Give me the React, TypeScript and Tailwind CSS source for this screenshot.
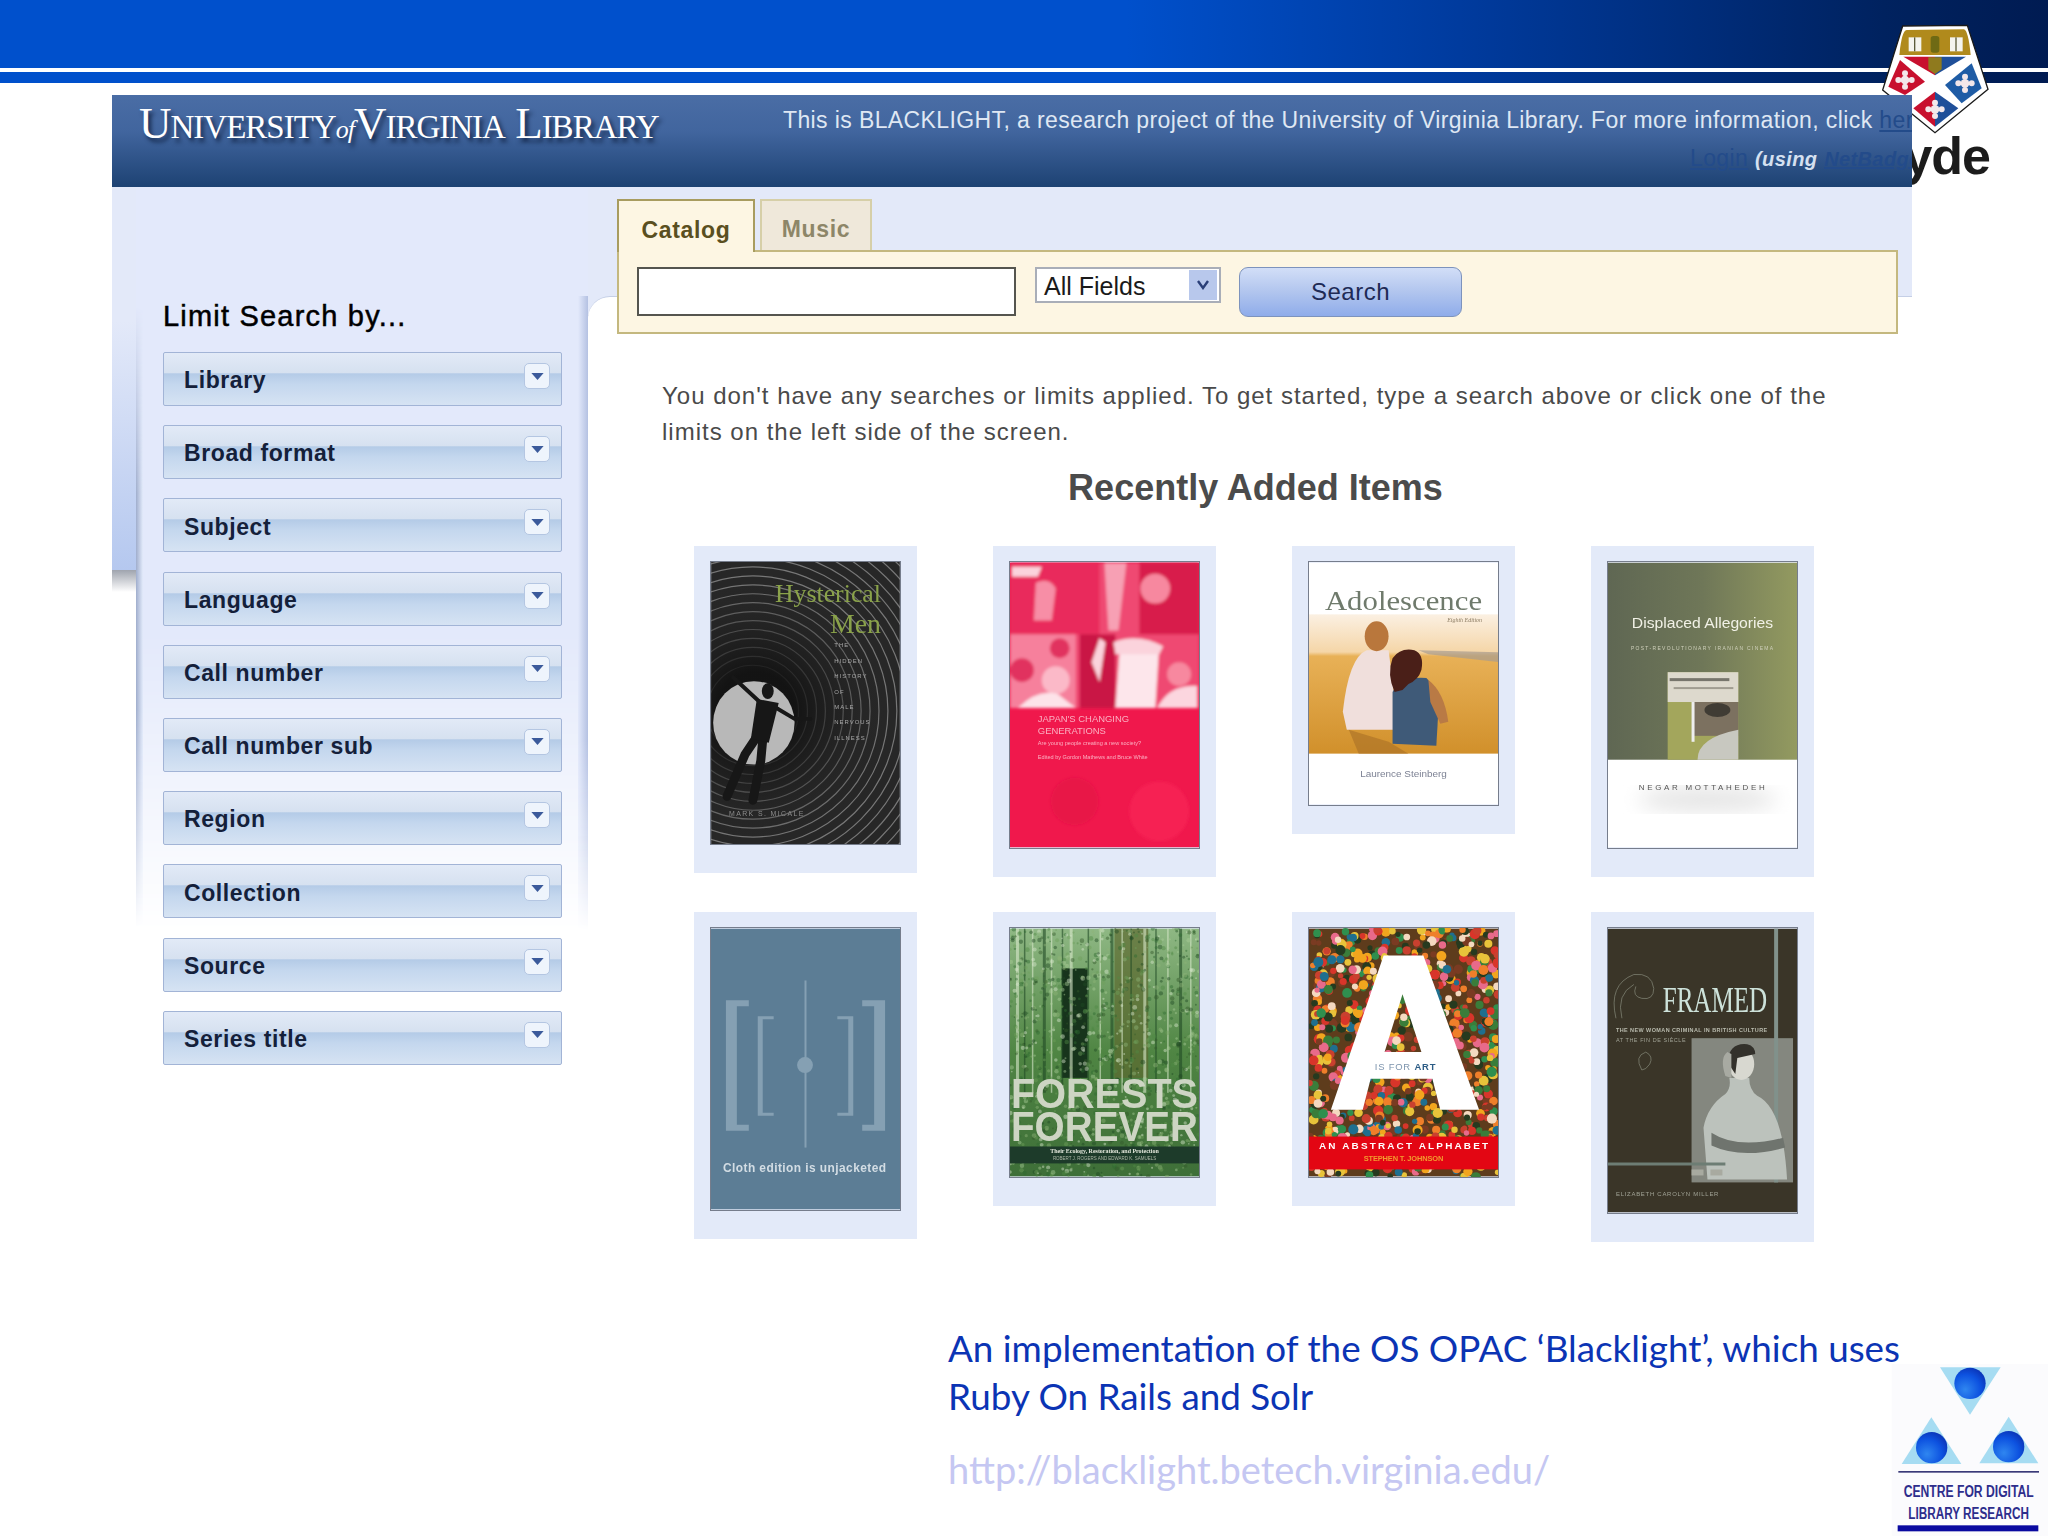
const filters = ["Library", "Broad format", "Subject", "Language", "Call number", "Call number sub", "Region", "Collection", "Source", "Series title"];

const makeDots = (count: number, seed: number, w: number, h: number, colors: string[], min: number, spread: number) => {
  const list: { x: number; y: number; r: number; c: string }[] = [];
  let s = seed;
  const next = () => {
    s = (s * 1103515245 + 12345) % 2147483648;
    return s / 2147483648;
  };
  for (let i = 0; i < count; i++) {
    list.push({ x: next() * w, y: next() * h, r: min + next() * spread, c: colors[Math.floor(next() * colors.length)] });
  }
  return list;
};
const candy = makeDots(950, 17, 190, 250, ["#d8352a", "#f2a51e", "#2f8f4e", "#e8c33a", "#c9402f", "#1f6f8f", "#7a3b22", "#ef7f2a", "#f4d9c0", "#3a7d3a", "#e86a8a", "#263a1f"], 2.6, 2.6);
const leaves = makeDots(1300, 5, 190, 250, ["#d9e8cf", "#a9cb96", "#6fa05c", "#4f8a45", "#2f6a31", "#1e4a24", "#8fb377", "#34592b"], 0.8, 1.6);

const rings = Array.from({ length: 24 }, (_, i) => 46 + i * 9);
const trees = [6, 14, 22, 33, 41, 52, 60, 78, 90, 101, 112, 121, 134, 146, 158, 170, 181];

function HystericalMen() {
  return (
    <svg viewBox="0 0 190 284" className="w-full h-full block">
      <defs>
        <radialGradient id="tunnel" gradientUnits="userSpaceOnUse" cx="45" cy="150" r="130">
          <stop offset="0.3" stopColor="#111" stopOpacity="0.9" />
          <stop offset="0.8" stopColor="#222" stopOpacity="0.25" />
          <stop offset="1" stopColor="#222" stopOpacity="0" />
        </radialGradient>
      </defs>
      <rect width="190" height="284" fill="#272727" />
      {rings.map((r) => (
        <circle key={r} cx="42" cy="150" r={r} fill="none" stroke="#9a9a9a" strokeWidth="1.2" opacity="0.7" />
      ))}
      <rect width="190" height="284" fill="url(#tunnel)" />
      <ellipse cx="43" cy="162" rx="41" ry="42" fill="#b8b8b8" />
      <g stroke="#171717" strokeLinecap="round" fill="none">
        <path d="M50 142 L22 116" strokeWidth="4" />
        <path d="M64 146 L84 158 L100 158" strokeWidth="4" />
        <path d="M46 176 L34 194 L16 236" strokeWidth="9" />
        <path d="M52 178 L50 200 L42 240" strokeWidth="9" />
      </g>
      <ellipse cx="57" cy="130" rx="6" ry="8" fill="#171717" />
      <path d="M46 138 L68 142 L58 182 L40 178 Z" fill="#171717" />
      <text x="171" y="40" textAnchor="end" fontFamily="Liberation Serif" fontSize="26" fill="#8aa24a">Hysterical</text>
      <text x="171" y="72" textAnchor="end" fontFamily="Liberation Serif" fontSize="28" fill="#8aa24a">Men</text>
      {["THE", "HIDDEN", "HISTORY", "OF", "MALE", "NERVOUS", "ILLNESS"].map((t, i) => (
        <text key={t} x="124" y={86 + i * 15.5} fontFamily="Liberation Sans" fontSize="6" letterSpacing="1" fill="#a8a8a8">{t}</text>
      ))}
      <text x="18" y="256" fontFamily="Liberation Sans" fontSize="7" letterSpacing="1.4" fill="#8c8c8c">MARK S. MICALE</text>
    </svg>
  );
}

function JapanGenerations() {
  return (
    <svg viewBox="0 0 190 286" className="w-full h-full block">
      <defs>
        <filter id="soft">
          <feGaussianBlur stdDeviation="1.4" />
        </filter>
      </defs>
      <rect width="190" height="286" fill="#f0184c" />
      <g filter="url(#soft)">
        <rect width="190" height="146" fill="#ef4a72" />
        <rect x="0" y="0" width="90" height="72" fill="#e92b5c" />
        <path d="M95 0 l22 0 l-8 68 l-10 0 z" fill="#f7a0b4" />
        <rect x="130" y="0" width="60" height="72" fill="#d81b4c" />
        <circle cx="146" cy="26" r="15" fill="#f7889f" />
        <path d="M2 4 h30 l-4 10 h-26 z" fill="#fbd3dc" />
        <path d="M26 20 q14 -6 20 6 l-4 32 h-18 z" fill="#f78ea6" />
        <rect x="0" y="72" width="66" height="74" fill="#f6809c" />
        <circle cx="50" cy="86" r="10" fill="#e1305f" />
        <circle cx="12" cy="108" r="12" fill="#e1305f" />
        <circle cx="46" cy="118" r="14" fill="#fbb9c8" />
        <path d="M8 146 q20 -20 40 -14 l18 14 z" fill="#fde3e9" />
        <rect x="70" y="72" width="36" height="74" fill="#c91445" />
        <path d="M82 100 l8 -24 l6 4 l-6 40 z" fill="#fbd3dc" />
        <path d="M110 92 q24 -22 40 -8 l-4 62 l-40 0 z" fill="#fde6eb" />
        <path d="M104 80 q24 -10 50 4 l-4 8 h-44 z" fill="#fbd3dc" />
        <circle cx="170" cy="112" r="12" fill="#f7889f" />
        <path d="M148 146 q12 -24 40 -22 v22 z" fill="#fcd6df" />
      </g>
      <text x="28" y="160" fontFamily="Liberation Sans" fontSize="9.5" fill="#fbb0c2">JAPAN'S CHANGING</text>
      <text x="28" y="172" fontFamily="Liberation Sans" fontSize="9.5" fill="#fbb0c2">GENERATIONS</text>
      <text x="28" y="183" fontFamily="Liberation Sans" fontSize="5.6" fill="#fbb0c2">Are young people creating a new society?</text>
      <text x="28" y="197" fontFamily="Liberation Sans" fontSize="5.6" fill="#fbb0c2">Edited by Gordon Mathews and Bruce White</text>
      <g filter="url(#soft)">
        <circle cx="65" cy="240" r="24" fill="#e0103f" opacity="0.5" />
        <circle cx="150" cy="250" r="30" fill="#fa2858" opacity="0.6" />
      </g>
    </svg>
  );
}

function Adolescence() {
  return (
    <svg viewBox="0 0 190 243" className="w-full h-full block">
      <defs>
        <linearGradient id="beach" x1="0" x2="0" y1="0" y2="1">
          <stop offset="0" stopColor="#fbf0e2" />
          <stop offset="0.27" stopColor="#f5d6a8" />
          <stop offset="0.3" stopColor="#e8b157" />
          <stop offset="1" stopColor="#d1902b" />
        </linearGradient>
      </defs>
      <rect width="190" height="243" fill="#fff" />
      <rect y="52" width="190" height="140" fill="url(#beach)" />
      <path d="M110 88 L190 90 V100 L120 92 Z" fill="#a89c90" opacity="0.7" />
      <text x="95" y="48" textAnchor="middle" fontFamily="Liberation Serif" fontSize="28" fill="#6f7a6c" textLength="158" lengthAdjust="spacingAndGlyphs">Adolescence</text>
      <text x="174" y="60" textAnchor="end" fontFamily="Liberation Serif" fontSize="6" fontStyle="italic" fill="#8a7a60">Eighth Edition</text>
      <path d="M38 168 L34 150 Q40 95 58 88 H80 L90 168 Z" fill="#f0dfdc" />
      <ellipse cx="68" cy="74" rx="12" ry="15" fill="#b9773c" />
      <path d="M84 182 L84 130 Q92 114 118 116 Q128 125 130 150 L128 184 Z" fill="#3f5a78" />
      <path d="M120 118 Q136 130 140 160 L132 162 L122 140 Z" fill="#b97a45" />
      <path d="M86 130 Q78 112 84 96 Q92 85 106 88 Q116 92 113 108 Q110 118 100 122 L94 128 Z" fill="#4a1f18" />
      <path d="M40 168 L80 180 L100 192 L50 192 Z" fill="#a86f26" opacity="0.6" />
      <text x="95" y="216" textAnchor="middle" fontFamily="Liberation Sans" fontSize="10" fill="#7d8294">Laurence Steinberg</text>
    </svg>
  );
}

function DisplacedAllegories() {
  return (
    <svg viewBox="0 0 190 286" className="w-full h-full block">
      <defs>
        <linearGradient id="olive" x1="0" x2="1" y1="0" y2="0">
          <stop offset="0" stopColor="#5f6753" />
          <stop offset="0.5" stopColor="#6f7758" />
          <stop offset="1" stopColor="#939a60" />
        </linearGradient>
        <filter id="haze">
          <feGaussianBlur stdDeviation="10" />
        </filter>
      </defs>
      <rect width="190" height="286" fill="#fff" />
      <ellipse cx="100" cy="238" rx="70" ry="12" fill="#e4e4e4" filter="url(#haze)" />
      <rect width="190" height="198" fill="url(#olive)" />
      <text x="95" y="66" textAnchor="middle" fontFamily="Liberation Sans" fontSize="15.5" fill="#f1f1e6" textLength="142" lengthAdjust="spacingAndGlyphs">Displaced Allegories</text>
      <text x="95" y="88" textAnchor="middle" fontFamily="Liberation Sans" fontSize="5" letterSpacing="1" fill="#cfd0bb" textLength="144">POST-REVOLUTIONARY IRANIAN CINEMA</text>
      <rect x="60" y="110" width="71" height="88" fill="#a3a65c" />
      <rect x="60" y="110" width="71" height="30" fill="#ddd9cd" />
      <rect x="62" y="116" width="60" height="3" fill="#77756c" />
      <rect x="66" y="125" width="60" height="2" fill="#a09c90" />
      <rect x="85" y="140" width="46" height="34" fill="#7c7160" />
      <ellipse cx="110" cy="148" rx="13" ry="7" fill="#403c34" />
      <rect x="84" y="140" width="3" height="40" fill="#eee" />
      <path d="M90 198 q0 -22 41 -30 l0 30 z" fill="#c8c8c0" />
      <text x="95" y="228" textAnchor="middle" fontFamily="Liberation Sans" fontSize="8" letterSpacing="1.5" fill="#555" textLength="128">NEGAR MOTTAHEDEH</text>
    </svg>
  );
}

function Unjacketed() {
  return (
    <svg viewBox="0 0 190 282" className="w-full h-full block">
      <rect width="190" height="282" fill="#5c7d95" />
      <g fill="#85a0b3">
        <path d="M15 72 h23 v6 h-12 v119 h12 v6 h-23 z" />
        <path d="M175 72 h-23 v6 h12 v119 h-12 v6 h23 z" />
        <path d="M47 88 h16 v3 h-11 v94 h11 v3 h-16 z" />
        <path d="M143 88 h-16 v3 h11 v94 h-11 v3 h16 z" />
        <rect x="94" y="52" width="2" height="168" />
        <ellipse cx="94.500" cy="137" rx="8" ry="8" />
      </g>
      <text x="94" y="245" textAnchor="middle" fontFamily="Liberation Sans" fontSize="12" fontWeight="700" fill="#d3dde4" textLength="164">Cloth edition is unjacketed</text>
    </svg>
  );
}

function ForestsForever() {
  return (
    <svg viewBox="0 0 190 249" className="w-full h-full block">
      <defs>
        <linearGradient id="forest" x1="0" x2="0" y1="0" y2="1">
          <stop offset="0" stopColor="#8fb884" />
          <stop offset="0.5" stopColor="#4f8543" />
          <stop offset="1" stopColor="#3e6f38" />
        </linearGradient>
      </defs>
      <rect width="190" height="249" fill="url(#forest)" />
      <rect x="52" y="40" width="26" height="110" fill="#17341c" />
      <rect x="105" y="0" width="34" height="150" fill="#5c6a30" opacity="0.7" />
      {trees.map((x, i) => (
        <rect key={x} x={x} y="0" width={i % 3 === 0 ? 3 : 1.500} height="165" fill={i % 2 === 0 ? "#d8e8cc" : "#1f4a24"} opacity="0.6" />
      ))}
      {leaves.map((d, i) => (
        <circle key={i} cx={d.x} cy={d.y} r={d.r} fill={d.c} opacity="0.45" />
      ))}
      <text x="95" y="180" textAnchor="middle" fontFamily="Liberation Sans" fontWeight="700" fontSize="42" fill="#cdd5c3" textLength="188" lengthAdjust="spacingAndGlyphs">FORESTS</text>
      <text x="95" y="213" textAnchor="middle" fontFamily="Liberation Sans" fontWeight="700" fontSize="42" fill="#cdd5c3" textLength="188" lengthAdjust="spacingAndGlyphs">FOREVER</text>
      <rect y="219" width="190" height="17" fill="#1d3b2a" />
      <text x="95" y="226" textAnchor="middle" fontFamily="Liberation Serif" fontSize="6" fontWeight="700" fill="#e4e8dc">Their Ecology, Restoration, and Protection</text>
      <text x="95" y="233" textAnchor="middle" fontFamily="Liberation Sans" fontSize="4.500" fill="#aeb8a8">ROBERT J. ROGERS AND EDWARD K. SAMUELS</text>
    </svg>
  );
}

function IsForArt() {
  return (
    <svg viewBox="0 0 190 249" className="w-full h-full block">
      <rect width="190" height="249" fill="#5e3c1c" />
      {candy.map((d, i) => (
        <circle key={i} cx={d.x} cy={d.y} r={d.r} fill={d.c} />
      ))}
      <path fillRule="evenodd" fill="#fff" d="M75 27 L115 27 L171 182 L132 182 L124 151 L62 151 L54 182 L22 182 Z M94 66 L76 124 L113 124 Z" />
      <text x="97" y="142" textAnchor="middle" fontFamily="Liberation Sans" fontSize="9.500" letterSpacing="0.8" fill="#7d94ad">
        IS FOR <tspan fontWeight="700" fill="#2d5d86">ART</tspan>
      </text>
      <rect y="209" width="190" height="33" fill="#e30613" />
      <text x="95" y="222" textAnchor="middle" fontFamily="Liberation Sans" fontSize="10" fontWeight="700" fill="#fff" textLength="170">AN ABSTRACT ALPHABET</text>
      <text x="95" y="234" textAnchor="middle" fontFamily="Liberation Sans" fontSize="7.500" fontWeight="700" fill="#f39a2e" textLength="80">STEPHEN T. JOHNSON</text>
    </svg>
  );
}

function Framed() {
  return (
    <svg viewBox="0 0 190 285" className="w-full h-full block">
      <rect width="190" height="285" fill="#3a3528" />
      <rect x="84" y="110" width="102" height="145" fill="#84877f" />
      <rect x="167" y="0" width="4" height="255" fill="#81918b" />
      <path d="M100 252 L96 200 Q100 178 118 166 Q124 160 122 150 L142 150 Q142 162 150 168 Q176 180 180 252 Z" fill="#bcc2bc" />
      <ellipse cx="134" cy="136" rx="13" ry="16" fill="#d8d8d0" />
      <path d="M120 134 Q122 114 140 116 Q148 118 148 126 L130 130 L128 146 Z" fill="#33312b" />
      <path d="M118 148 Q112 130 120 124 L124 126 L124 150 Z" fill="#a8aaa2" />
      <path d="M104 205 Q130 222 176 210 L178 220 Q134 232 104 218 Z" fill="#6f746e" />
      <rect y="235" width="118" height="3" fill="#6d7d74" />
      <rect x="84" y="242" width="12" height="6" fill="#a8aaa0" />
      <rect x="103" y="242" width="12" height="6" fill="#a8aaa0" />
      <text x="55" y="84" fontFamily="Liberation Serif" fontSize="36" fill="#cde2da" textLength="105" lengthAdjust="spacingAndGlyphs">FRAMED</text>
      <g fill="none" stroke="#7d7f70" strokeWidth="0.8">
        <path d="M8 90 Q0 56 26 46 Q44 44 46 60 Q46 72 34 70 Q24 68 28 58" />
        <path d="M14 90 Q8 66 26 56" />
        <path d="M34 142 Q26 128 38 124 Q46 128 42 136 Q38 142 34 142 Z" />
      </g>
      <text x="8" y="104" fontFamily="Liberation Sans" fontSize="5.500" fontWeight="700" fill="#b9bbae" textLength="152">THE NEW WOMAN CRIMINAL IN BRITISH CULTURE</text>
      <text x="8" y="114" fontFamily="Liberation Sans" fontSize="5.500" fill="#a0a295" textLength="70">AT THE FIN DE SIÈCLE</text>
      <text x="8" y="269" fontFamily="Liberation Sans" fontSize="6" letterSpacing="1" fill="#a0a295" textLength="104">ELIZABETH CAROLYN MILLER</text>
    </svg>
  );
}

const books = [
  { id: 1, h: "h-[282px]", cover: <HystericalMen /> },
  { id: 2, h: "h-[286px]", cover: <JapanGenerations /> },
  { id: 3, h: "h-[243px]", cover: <Adolescence /> },
  { id: 4, h: "h-[286px]", cover: <DisplacedAllegories /> },
  { id: 5, h: "h-[282px]", cover: <Unjacketed /> },
  { id: 6, h: "h-[249px]", cover: <ForestsForever /> },
  { id: 7, h: "h-[249px]", cover: <IsForArt /> },
  { id: 8, h: "h-[285px]", cover: <Framed /> },
];

function Flower({ x, y }: { x: number; y: number }) {
  return (
    <g fill="#f3e7ea">
      <circle cx={x} cy={y} r="13" />
      <circle cx={x - 20} cy={y} r="9" />
      <circle cx={x + 20} cy={y} r="9" />
      <circle cx={x} cy={y - 20} r="9" />
      <circle cx={x} cy={y + 20} r="9" />
    </g>
  );
}

function StrathclydeLogo() {
  return (
    <div className="absolute left-[1860px] top-[10px] w-[188px] h-[190px] z-10">
      <svg viewBox="0 0 564 372" className="w-full h-[124px] block">
        <path d="M128 48 L322 46 L384 238 L225 368 L68 240 Z" fill="#fff" stroke="#1a1a1a" strokeWidth="4" />
        <path d="M140 60 L312 58 Q325 62 332 135 L118 135 Q125 62 140 60 Z" fill="#b08a1c" />
        <rect x="146" y="82" width="38" height="42" fill="#f4f4ee" />
        <rect x="270" y="82" width="38" height="42" fill="#f4f4ee" />
        <rect x="162" y="82" width="4" height="42" fill="#5b5b3a" />
        <rect x="286" y="82" width="4" height="42" fill="#5b5b3a" />
        <rect x="212" y="78" width="26" height="50" rx="8" fill="#6f6a14" />
        <path d="M130 140 L225 140 L225 196 Z" fill="#c8102e" />
        <path d="M225 140 L318 140 L225 196 Z" fill="#1f4f99" />
        <path d="M205 142 h40 v36 l-20 14 l-20 -14 z" fill="#8f7a1e" />
        <path d="M120 150 L195 215 L135 255 L85 230 Z" fill="#c8102e" />
        <path d="M335 160 L365 235 L305 280 L255 225 Z" fill="#1f5ca5" />
        <path d="M225 245 L160 295 L225 350 Z" fill="#c8102e" />
        <path d="M225 245 L295 295 L225 350 Z" fill="#1f4f99" />
        <Flower x={135} y={210} />
        <Flower x={315} y={220} />
        <Flower x={225} y={298} />
      </svg>
      <div className="text-right pr-[58px] -mt-[8px] font-['Liberation_Sans',sans-serif] font-bold text-[52px] leading-[60px] tracking-[-1px] text-[#1c1c1c]">yde</div>
    </div>
  );
}

function CdlrLogo() {
  return (
    <div className="absolute z-30 left-[1860px] top-[1340px] w-[188px] h-[196px]">
      <svg viewBox="0 0 564 588" className="w-full h-full block">
        <defs>
          <radialGradient id="ball" cx="0.35" cy="0.7" r="0.8">
            <stop offset="0" stopColor="#2f86f0" />
            <stop offset="0.6" stopColor="#0d52e0" />
            <stop offset="1" stopColor="#0a2fb0" />
          </radialGradient>
        </defs>
        <rect x="95" y="72" width="469" height="516" fill="#fbfbfd" />
        <path d="M240 82 L422 82 L330 224 Z" fill="#a6dcf2" />
        <path d="M125 372 L214 232 L304 372 Z" fill="#a6dcf2" />
        <path d="M358 370 L446 230 L535 370 Z" fill="#a6dcf2" />
        <circle cx="330" cy="130" r="47" fill="url(#ball)" />
        <circle cx="215" cy="323" r="47" fill="url(#ball)" />
        <circle cx="446" cy="320" r="47" fill="url(#ball)" />
        <rect x="115" y="393" width="422" height="5" fill="#3a3a78" />
        <text x="326" y="471" textAnchor="middle" fontFamily="Liberation Sans" fontWeight="700" fontSize="52" fill="#2e2e8c" textLength="390" lengthAdjust="spacingAndGlyphs">CENTRE FOR DIGITAL</text>
        <text x="326" y="536" textAnchor="middle" fontFamily="Liberation Sans" fontWeight="700" fontSize="52" fill="#2e2e8c" textLength="362" lengthAdjust="spacingAndGlyphs">LIBRARY RESEARCH</text>
        <rect x="113" y="556" width="422" height="18" fill="#0a0aa0" />
      </svg>
    </div>
  );
}

function FilterRow({ label }: { label: string }) {
  return (
    <div className="relative h-[54px] border border-[#a2b4d6] rounded-[2px] bg-[linear-gradient(#e2eaf7_0,#d6e1f0_38%,#b4cbe7_40%,#c4d7ee_60%,#d6e3f3_100%)] flex items-center pl-[20px] pt-[3px]">
      <span className="font-bold text-[23px] tracking-[0.6px] text-[#14203a]">{label}</span>
      <span className="absolute right-[11px] top-[10px] w-[26px] h-[26px] rounded-[5px] bg-[#eef4fc] border border-[#b4c6e2] flex items-center justify-center">
        <svg viewBox="0 0 14 8" className="w-[13px] h-[7px]">
          <path d="M0 0 H14 L7 8 Z" fill="#3b5a9b" />
        </svg>
      </span>
    </div>
  );
}

export default function App() {
  return (
    <div className="relative w-[2048px] h-[1536px] overflow-hidden bg-white font-['Liberation_Sans',sans-serif]">
      <div className="h-[68px] bg-[linear-gradient(to_right,#0050cc_0,#0050cc_55%,#003a9c_72%,#00225f_92%,#001b52_100%)]" />
      <div className="h-[4px] bg-white" />
      <div className="h-[11px] bg-[linear-gradient(to_right,#0050cc_0,#0050cc_55%,#003a9c_72%,#00225f_92%,#001b52_100%)]" />

      <StrathclydeLogo />

      <div className="relative z-20 mt-[12px] ml-[112px] w-[1800px]">
        <header className="relative h-[92px] overflow-hidden bg-[linear-gradient(#4a6da5_0,#41659e_40%,#1d4273_100%)]">
          <div className="flex items-start justify-between">
            <div className="pl-[27px] pt-[5px] font-['Liberation_Serif',serif] text-white leading-[46px] tracking-[-1px] whitespace-nowrap [text-shadow:3px_4px_4px_rgba(10,25,55,.8)]">
              <span className="text-[45px]">U</span>
              <span className="text-[33px]">NIVERSITY</span>
              <span className="text-[26px] italic">of</span>
              <span className="text-[45px]">V</span>
              <span className="text-[33px]">IRGINIA</span>
              <span className="text-[45px]"> L</span>
              <span className="text-[33px]">IBRARY</span>
            </div>
            <div className="w-[1129px] shrink-0 overflow-hidden whitespace-nowrap pt-[9px] text-[23px] leading-[32px] tracking-[0.39px] text-[#dfe7f3]">
              This is BLACKLIGHT, a research project of the University of Virginia Library. For more information, click <span className="underline text-[#234b8a]">here</span>
              <div className="pl-[907px] pt-[6px]">
                <span className="text-[#234b8a] underline">Login</span>{" "}
                <span className="font-bold italic text-[20px] text-[#d5e0f0]">(using</span>{" "}
                <span className="font-bold italic text-[20px] text-[#234b8a] underline">NetBadge)</span>
              </div>
            </div>
          </div>
        </header>

        <div className="flex items-start">
          <div className="w-[24px] shrink-0">
            <div className="h-[383px] bg-[linear-gradient(#e3e9f9_0,#e3e9f9_35%,#b5c8ef_100%)]" />
            <div className="h-[22px] bg-[linear-gradient(#9fa4ae_0,#ffffff_100%)]" />
          </div>

          <aside className="relative w-[452px] shrink-0 pt-[111px] pl-[27px] pr-[26px]">
            <div className="absolute inset-x-0 top-0 h-[744px] bg-[#e3e9fb] [mask-image:linear-gradient(black_60%,transparent_100%)]" />
            <div className="absolute left-0 top-[120px] w-[7px] h-[620px] bg-[linear-gradient(to_right,#a0aecd,#e3ebfb)] [mask-image:linear-gradient(transparent_0,black_30%,black_65%,transparent_100%)]" />
            <div className="absolute right-0 top-[109px] w-[10px] h-[635px] bg-[linear-gradient(to_right,#e3e9fb,#b4c1e2)] [mask-image:linear-gradient(black_70%,transparent_100%)]" />
            <h2 className="relative h-[36px] mb-[18px] text-[29px] leading-[36px] font-medium tracking-[1.2px] text-black [-webkit-text-stroke:0.5px_black]">Limit Search by...</h2>
            <div className="relative flex flex-col gap-[19.200px]">
              {filters.map((f) => (
                <FilterRow key={f} label={f} />
              ))}
            </div>
          </aside>

          <main className="relative w-[1324px] shrink-0">
            <div className="h-[129px] -mb-[20px] bg-[#e3e9f9] border-b border-[#b8c3de]" />
            <div className="relative rounded-tl-[22px] bg-white border-t border-[#c5cfe6] h-[1240px]">
              <div className="-mt-[98px] ml-[29px] w-[1281px]">
                <div className="flex items-end">
                  <div className="w-[138px] h-[53px] -mb-[2px] pt-[7px] relative z-10 flex items-center justify-center bg-[#fdf6e3] border-2 border-b-0 border-[#a89c5f] text-[23px] font-bold tracking-[0.7px] text-[#5a4f20]">Catalog</div>
                  <div className="w-[112px] h-[51px] ml-[5px] pt-[7px] flex items-center justify-center bg-[#efe8da] border-2 border-b-0 border-[#d6cfa8] text-[23px] font-bold tracking-[0.7px] text-[#8d8668]">Music</div>
                </div>
                <form className="h-[84px] border-2 border-[#c4b87f] bg-[#fdf6e3] flex items-start pl-[18px] pt-[15px]">
                  <div className="w-[379px] h-[49px] border-2 border-[#55554f] bg-white" />
                  <div className="w-[186px] h-[36px] ml-[19px] border-2 border-[#a9aeb8] bg-white flex items-center justify-between pl-[7px] pr-[2px] text-[25px] text-[#1a1a1a]">
                    <span className="pt-[3px]">All Fields</span>
                    <span className="w-[28px] h-[30px] bg-[#b8c8ec] flex items-center justify-center">
                      <svg viewBox="0 0 12 10" className="w-[12px] h-[10px]">
                        <path d="M1 1 L6 8 L11 1" fill="none" stroke="#2a3f78" strokeWidth="2.4" />
                      </svg>
                    </span>
                  </div>
                  <div className="w-[223px] h-[50px] ml-[18px] rounded-[9px] border border-[#7d93bd] bg-[linear-gradient(#d2def7_0,#b1c5ee_50%,#8facea_100%)] flex items-center justify-center text-[24px] tracking-[0.5px] text-[#1e2a55]">Search</div>
                </form>
              </div>

              <p className="ml-[74px] mt-[44px] w-[1190px] text-[24px] leading-[36px] tracking-[1px] text-[#4a4a4a]">
                You don't have any searches or limits applied. To get started, type a search above or click one of the limits on the left side of the screen.
              </p>
              <h1 className="mt-[18px] h-[40px] pl-[11px] text-center text-[36px] leading-[40px] font-bold text-[#4b4b4b]">Recently Added Items</h1>

              <div className="ml-[106px] mt-[38px] grid grid-cols-[223px_223px_223px_223px] gap-x-[76px] gap-y-[35px] items-start">
                {books.map((b) => (
                  <div key={b.id} className="bg-[#e3eaf9] pt-[16px] px-[17px] pb-[29px]">
                    <div className={`${b.h} outline outline-1 outline-[#767d8c] overflow-hidden`}>
                      <div className="h-full blur-[0.4px]">{b.cover}</div>
                    </div>
                  </div>
                ))}
              </div>

              <div className="ml-[360px] mt-[82px] font-['Lato',sans-serif] text-[36.800px] leading-[48px] text-[#0b34b4]">
                <p className="whitespace-nowrap">An implementation of the OS OPAC ‘Blacklight’, which uses</p>
                <p>Ruby On Rails and Solr</p>
                <p className="mt-[25px] text-[38px] text-[#c5c7f2]">http://blacklight.betech.virginia.edu/</p>
              </div>
            </div>
          </main>
        </div>
      </div>

      <CdlrLogo />
    </div>
  );
}
